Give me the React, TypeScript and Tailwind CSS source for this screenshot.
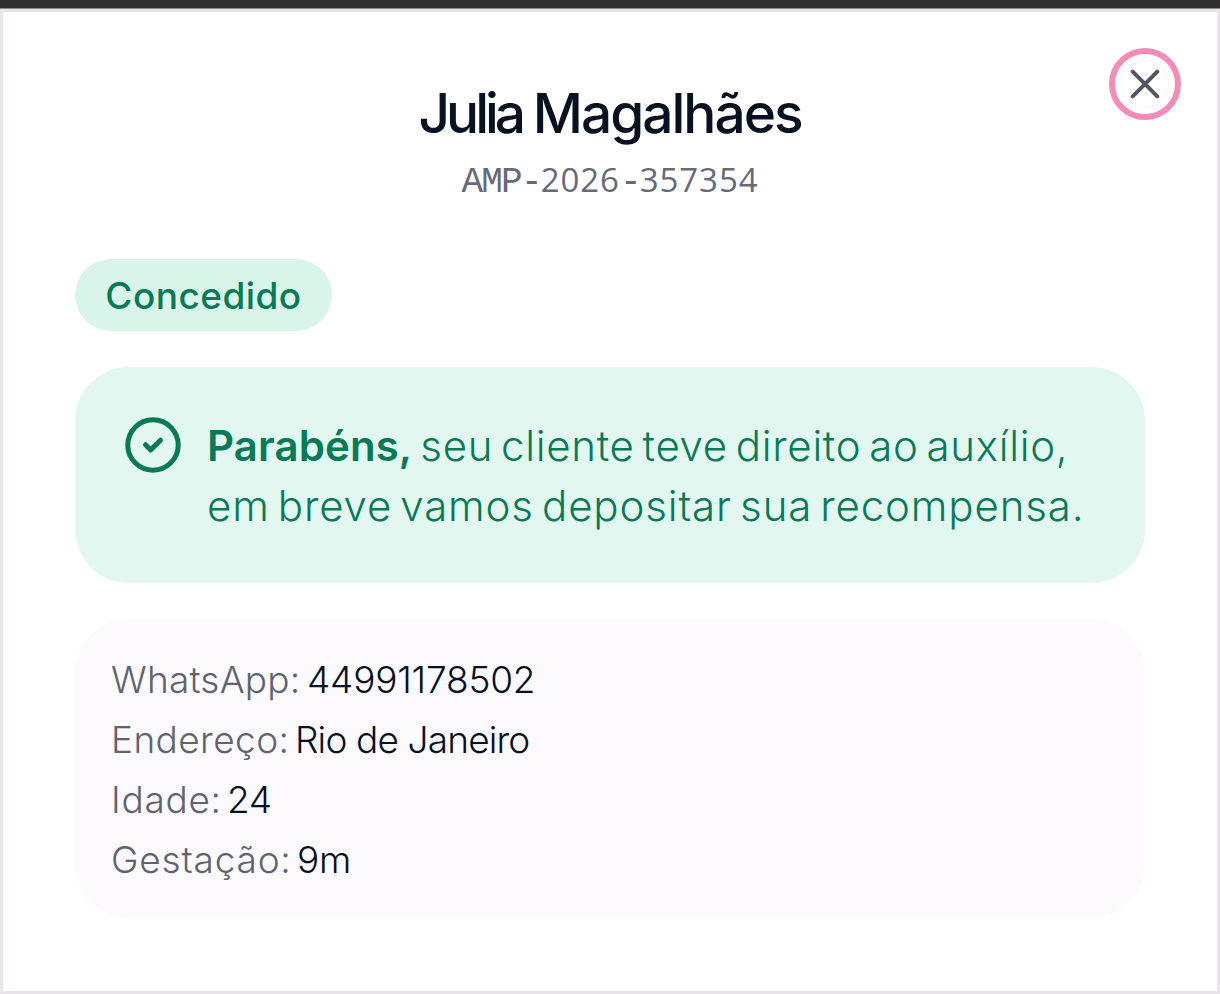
type DetailRowProps = {
  label: string;
  value: string;
  labelClass: string;
  valueClass: string;
};

const details: DetailRowProps[] = [
  { label: 'WhatsApp:', value: '44991178502', labelClass: 'w-[196px] tracking-[0.2px]', valueClass: 'tracking-[-0.2px]' },
  { label: 'Endereço:', value: 'Rio de Janeiro', labelClass: 'w-[184px] tracking-[0.4px]', valueClass: 'tracking-[-0.85px]' },
  { label: 'Idade:', value: '24', labelClass: 'w-[116px] tracking-[0.7px]', valueClass: 'tracking-[-0.5px]' },
  { label: 'Gestação:', value: '9m', labelClass: 'w-[186px] tracking-[0.8px]', valueClass: 'tracking-[-0.2px]' },
];

function DetailRow({ label, value, labelClass, valueClass }: DetailRowProps) {
  return (
    <div className="flex h-[60px] items-center whitespace-nowrap">
      <dt className={`shrink-0 text-[#5f636f] ${labelClass}`}>{label}</dt>
      <dd className={`text-[#08111f] ${valueClass}`}>{value}</dd>
    </div>
  );
}

export default function App() {
  return (
    <div className="flex h-[994px] w-[1220px] flex-col overflow-hidden bg-[#e9e4ea] font-['Inter',sans-serif]">
      {/* Strip of the page behind the dialog */}
      <div className="h-[9px] shrink-0 border-b border-[#8a888a] bg-[#303030]" />

      <section
        role="dialog"
        aria-label="Julia Magalhães"
        className="relative mx-[3px] mt-[3px] h-[979px] bg-white px-[72px] pt-[71px]"
      >
        {/* Close button */}
        <button
          aria-label="Fechar"
          className="absolute top-[36px] right-[36px] flex size-[72px] items-center justify-center rounded-full border-[6px] border-[#f48bb8]"
        >
          <span className="flex size-[48px] items-center justify-center rounded-full border border-[#f8f3f7]">
            <svg className="size-[30px] shrink-0" viewBox="0 0 30 30" fill="none" stroke="#505762" strokeWidth="4" strokeLinecap="round">
              <path d="M2.7 2.7l24.6 24.6M27.3 2.7l-24.6 24.6" />
            </svg>
          </span>
        </button>

        {/* Name and protocol */}
        <header className="flex flex-col items-center whitespace-nowrap">
          <h1 className="h-[60px] text-[55px] leading-[60px] font-medium tracking-[-2px] text-[#08111f]">
            <span className="tracking-[-4px]">Julia </span>
            <span>Magalhães</span>
          </h1>
          <p className="mt-[7px] h-[60px] font-['Open_Sans',sans-serif] text-[33px] leading-[60px] tracking-[0.93px] text-[#666a76]">
            <span className="font-['Liberation_Mono',monospace] text-[36px] tracking-[-1.8px]">AMP-</span>
            <span>2026</span>
            <span className="font-['Liberation_Mono',monospace] text-[36px] tracking-[-1.8px]">-</span>
            <span>357354</span>
          </p>
        </header>

        {/* Status */}
        <div className="mt-[49px] flex h-[72px] w-[257px] items-center justify-center rounded-full bg-[#d9f4e8] pt-[2px] text-[37px] font-medium tracking-[0.45px] text-[#087a55]">
          Concedido
        </div>

        {/* Result message */}
        <div className="mt-[36px] flex h-[216px] rounded-[54px] bg-[#e2f7f0] pt-[49px] pl-[50px] text-[#087a55]">
          <svg className="mt-[1px] size-[56px] shrink-0" viewBox="0 0 56 56" fill="none" stroke="currentColor" strokeWidth="5" strokeLinecap="round" strokeLinejoin="round">
            <circle cx="28" cy="28" r="25.2" />
            <path d="M20.5 27.7l5.2 5.2L35.5 23.2" />
          </svg>
          <p className="ml-[26px] text-[42px] leading-[60px] font-light whitespace-nowrap [word-spacing:-4.5px]">
            <span className="block tracking-[0.68px]">
              <strong className="font-semibold tracking-[0.1px]">Parabéns,</strong> seu cliente teve direito ao auxílio,
            </span>
            <span className="block tracking-[0.85px]">em breve vamos depositar sua recompensa.</span>
          </p>
        </div>

        {/* Client details */}
        <dl className="mt-[36px] h-[299px] rounded-[54px] bg-[#fcfafd] px-[36px] pt-[31px] text-[37px] leading-[60px] font-light">
          {details.map((item) => (
            <DetailRow key={item.label} {...item} />
          ))}
        </dl>
      </section>
    </div>
  );
}
